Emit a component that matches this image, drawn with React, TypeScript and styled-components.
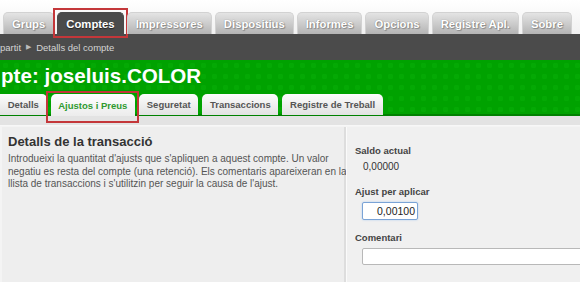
import React from "react";
import styled, { createGlobalStyle, css } from "styled-components";

const GlobalStyle = createGlobalStyle`
  html, body {
    margin: 0;
    padding: 0;
    background: #ffffff;
    font-family: "Liberation Sans", Arial, sans-serif;
  }
  * { box-sizing: border-box; }
`;

const Page = styled.div`
  width: 580px;
  height: 282px;
  overflow: hidden;
  display: flex;
  flex-direction: column;
  background: #f2f2f2;
`;

const TabStrip = styled.nav`
  height: 34px;
  padding: 12px 0 0 3px;
  display: flex;
  align-items: flex-end;
  gap: 3px;
  background: linear-gradient(#ffffff, #f1f1f1);
`;

const MainTab = styled.div<{ $active?: boolean }>`
  position: relative;
  height: 22px;
  padding: 0 8px;
  display: flex;
  align-items: center;
  border-radius: 5px 5px 0 0;
  font-size: 11.3px;
  font-weight: bold;
  color: #ffffff;
  white-space: nowrap;
  text-shadow: 0 0 1px #7a7a7a, 1px 1px 1px #8a8a8a;
  border: 1px solid #d2d2d2;
  border-bottom: none;
  background: linear-gradient(#e4e4e4, #b4b4b4);
  ${(p) =>
    p.$active &&
    css`
      background: #4b4b4b;
      border-color: #4b4b4b;
      text-shadow: 0 1px 1px #222;
      &::after {
        content: "";
        position: absolute;
        top: -5px;
        left: -5px;
        right: -5px;
        bottom: -4px;
        border: 2px solid #c4373a;
      }
    `}
`;

const DarkBar = styled.div`
  height: 26px;
  background: #4b4b4b;
  display: flex;
  align-items: center;
  font-size: 9.5px;
  color: #d4d4d4;
  white-space: nowrap;
`;

const Arrow = styled.span`
  margin: 0 5px 0 5px;
  font-size: 7px;
  color: #bbb;
`;

const GreenBand = styled.div`
  height: 56px;
  display: flex;
  flex-direction: column;
  justify-content: space-between;
  background-color: #00a200;
  background-image: radial-gradient(circle, #04a904 35%, transparent 38%);
  background-size: 11px 11px;
  border-bottom: 2px solid #008100;
`;

const Title = styled.h1`
  margin: 4px 0 0 1px;
  font-size: 20.6px;
  line-height: 24px;
  font-weight: bold;
  color: #ffffff;
  white-space: nowrap;
`;

const SubTabs = styled.div`
  display: flex;
  gap: 4px;
  margin-bottom: -2px;
`;

const SubTab = styled.div<{ $active?: boolean; $first?: boolean }>`
  position: relative;
  height: 21px;
  padding: 0 7.7px;
  display: flex;
  align-items: center;
  font-size: 9.5px;
  font-weight: bold;
  color: #555555;
  white-space: nowrap;
  border-radius: ${(p) => (p.$first ? "0 5px 0 0" : "5px 5px 0 0")};
  background: linear-gradient(#fdfdfd, #e2e2e2);
  ${(p) =>
    p.$active &&
    css`
      height: 22px;
      color: #2f9a2f;
      background: linear-gradient(#ffffff, #ececec);
      &::after {
        content: "";
        position: absolute;
        top: -3px;
        left: -5px;
        right: -4px;
        bottom: -7px;
        border: 2px solid #c4373a;
      }
    `}
`;

const SubBar = styled.div`
  height: 10px;
  background: #e3e3e3;
  border-bottom: 1px solid #f7f7f7;
`;

const Content = styled.div`
  flex: 1;
  display: flex;
  padding: 1px 0 0 2px;
  background: #f4f4f4;
`;

const LeftPanel = styled.section`
  width: 344px;
  padding: 7px 10px 0 6px;
  background: #eeeeee;
  border-right: 2px solid #dddddd;
`;

const Heading = styled.h2`
  margin: 0;
  font-size: 13px;
  line-height: 16px;
  font-weight: bold;
  color: #333333;
`;

const Para = styled.p`
  margin: 3px 0 0;
  font-size: 10px;
  line-height: 12.5px;
  color: #555555;
  white-space: nowrap;
`;

const RightPanel = styled.section`
  flex: 1;
  padding: 18px 0 0 8px;
  background: #f0f0f0;
  border-left: 1px solid #fafafa;
  display: flex;
  flex-direction: column;
  align-items: flex-start;
`;

const Label = styled.div<{ $gap?: number }>`
  margin-top: ${(p) => p.$gap ?? 0}px;
  font-size: 9.5px;
  line-height: 12px;
  font-weight: bold;
  color: #444444;
  white-space: nowrap;
`;

const Value = styled.div`
  margin: 4px 0 0 8px;
  font-size: 10px;
  line-height: 12px;
  color: #333333;
`;

const Field = styled.div<{ $focused?: boolean; $w: number; $h: number }>`
  margin: 4px 0 0 7px;
  width: ${(p) => p.$w}px;
  height: ${(p) => p.$h}px;
  flex-shrink: 0;
  background: #ffffff;
  border: 1px solid ${(p) => (p.$focused ? "#7aa3d6" : "#b8b8b8")};
  border-radius: 2px;
  box-shadow: ${(p) => (p.$focused ? "0 0 2px #a9c8ef" : "none")};
  display: flex;
  align-items: center;
  justify-content: flex-end;
  padding-right: 2px;
  font-size: 10.5px;
  color: #222222;
`;

const mainTabs = [
  "Grups",
  "Comptes",
  "Impressores",
  "Dispositius",
  "Informes",
  "Opcions",
  "Registre Apl.",
  "Sobre",
];

const subTabs = [
  "Detalls",
  "Ajustos i Preus",
  "Seguretat",
  "Transaccions",
  "Registre de Treball",
];

export default function App() {
  return (
    <>
      <GlobalStyle />
      <Page>
        <TabStrip>
          {mainTabs.map((t) => (
            <MainTab key={t} $active={t === "Comptes"}>
              {t}
            </MainTab>
          ))}
        </TabStrip>
        <DarkBar>
          partit<Arrow>▶</Arrow>Detalls del compte
        </DarkBar>
        <GreenBand>
          <Title>pte: joseluis.COLOR</Title>
          <SubTabs>
            {subTabs.map((t, i) => (
              <SubTab key={t} $first={i === 0} $active={t === "Ajustos i Preus"}>
                {t}
              </SubTab>
            ))}
          </SubTabs>
        </GreenBand>
        <SubBar />
        <Content>
          <LeftPanel>
            <Heading>Detalls de la transacció</Heading>
            <Para>
              Introdueixi la quantitat d'ajusts que s'apliquen a aquest compte. Un valor
              <br />
              negatiu es resta del compte (una retenció). Els comentaris apareixeran en la
              <br />
              llista de transaccions i s'utilitzin per seguir la causa de l'ajust.
            </Para>
          </LeftPanel>
          <RightPanel>
            <Label>Saldo actual</Label>
            <Value>0,00000</Value>
            <Label $gap={13}>Ajust per aplicar</Label>
            <Field $focused $w={56} $h={18}>
              0,00100
            </Field>
            <Label $gap={12}>Comentari</Label>
            <Field $w={260} $h={17} />
          </RightPanel>
        </Content>
      </Page>
    </>
  );
}
